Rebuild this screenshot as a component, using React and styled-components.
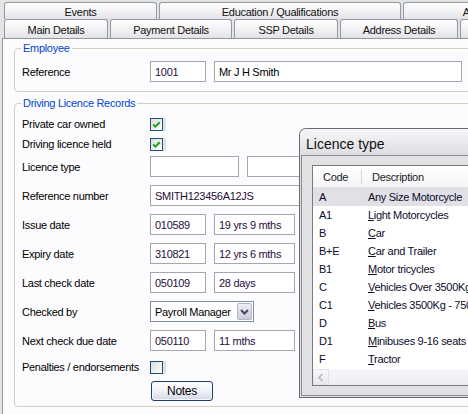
import React from 'react'
import styled, { createGlobalStyle } from 'styled-components'

const GlobalStyle = createGlobalStyle`
  html, body {
    margin: 0;
    padding: 0;
  }
  body {
    background: #e4e4e4;
    font-family: "Liberation Sans", Arial, sans-serif;
    font-size: 11px;
    letter-spacing: -0.3px;
    color: #000;
  }
`

const tabsTop = [
  { label: 'Events', width: 153 },
  { label: 'Education / Qualifications', width: 242 },
  { label: 'Absence', width: 160 },
]

const tabsBottom = [
  { label: 'Main Details', width: 104 },
  { label: 'Payment Details', width: 122 },
  { label: 'SSP Details', width: 104 },
  { label: 'Address Details', width: 118 },
  { label: 'Pension', width: 120 },
]

const licences = [
  ['A', 'Any Size Motorcycle'],
  ['A1', 'Light Motorcycles'],
  ['B', 'Car'],
  ['B+E', 'Car and Trailer'],
  ['B1', 'Motor tricycles'],
  ['C', 'Vehicles Over 3500Kg'],
  ['C1', 'Vehicles 3500Kg - 7500Kg'],
  ['D', 'Bus'],
  ['D1', 'Minibuses 9-16 seats'],
  ['F', 'Tractor'],
]

const Tick = () => (
  <svg width="11" height="11" viewBox="0 0 11 11">
    <path d="M2.2 5.4 L4.4 7.6 L8.8 3.2" fill="none" stroke="#21a121" strokeWidth="2" />
  </svg>
)

const CheckBox = ({ checked }) => <Check>{checked && <Tick />}</Check>

const App = () => {
  return (
    <Screen>
      <GlobalStyle />
      <TabRow $height={17}>
        {tabsTop.map((t) => (
          <Tab key={t.label} $width={t.width}>{t.label}</Tab>
        ))}
      </TabRow>
      <TabRow $height={19}>
        {tabsBottom.map((t) => (
          <Tab key={t.label} $width={t.width}>{t.label}</Tab>
        ))}
      </TabRow>

      <Panel>
        <GroupBox $top={3}>
          <Legend>Employee</Legend>
          <GroupInner $pt={6} $pb={9}>
            <Row $height={21}>
              <Label>Reference</Label>
              <Controls>
                <Field $width={56}>1001</Field>
                <Field $width={248} $dark>Mr J H Smith</Field>
              </Controls>
            </Row>
          </GroupInner>
        </GroupBox>

        <GroupBox $top={5}>
          <Legend>Driving Licence Records</Legend>
          <GroupInner $pt={4} $pb={5}>
            <Row $height={20}>
              <Label>Private car owned</Label>
              <CheckBox checked />
            </Row>
            <Row $height={18} $pt={2}>
              <Label>Driving licence held</Label>
              <CheckBox checked />
            </Row>
            <Row $height={29}>
              <Label>Licence type</Label>
              <Controls>
                <Field $width={89} />
                <Field $width={120} />
              </Controls>
            </Row>
            <Row $height={29}>
              <Label>Reference number</Label>
              <Field $width={220}>SMITH123456A12JS</Field>
            </Row>
            <Row $height={29}>
              <Label>Issue date</Label>
              <Controls>
                <Field $width={56}>010589</Field>
                <Field $width={81}>19 yrs 9 mths</Field>
              </Controls>
            </Row>
            <Row $height={29}>
              <Label>Expiry date</Label>
              <Controls>
                <Field $width={56}>310821</Field>
                <Field $width={81}>12 yrs 6 mths</Field>
              </Controls>
            </Row>
            <Row $height={29}>
              <Label>Last check date</Label>
              <Controls>
                <Field $width={56}>050109</Field>
                <Field $width={81}>28 days</Field>
              </Controls>
            </Row>
            <Row $height={29}>
              <Label>Checked by</Label>
              <Select>
                <span>Payroll Manager</span>
                <DropButton>
                  <svg width="11" height="8" viewBox="0 0 11 8">
                    <path d="M2 2 L5.5 5.5 L9 2" fill="none" stroke="#404a66" strokeWidth="2" />
                  </svg>
                </DropButton>
              </Select>
            </Row>
            <Row $height={29}>
              <Label>Next check due date</Label>
              <Controls>
                <Field $width={56}>050110</Field>
                <Field $width={81}>11 mths</Field>
              </Controls>
            </Row>
            <Row $height={24}>
              <Label>Penalties / endorsements</Label>
              <CheckBox />
            </Row>
            <Row $height={22} $pt={2}>
              <Label />
              <Button>Notes</Button>
            </Row>
          </GroupInner>
        </GroupBox>
      </Panel>

      <Popup>
        <TitleBar>Licence type</TitleBar>
        <PopupBody>
          <ListView>
            <ListHeader>
              <HeadCell $first>Code</HeadCell>
              <HeadCell>Description</HeadCell>
            </ListHeader>
            {licences.map(([code, desc], i) => (
              <ListRow key={code} $selected={i === 0}>
                <CodeCell>{code}</CodeCell>
                <DescCell>
                  {i === 0 ? desc : (
                    <>
                      <u>{desc[0]}</u>
                      {desc.slice(1)}
                    </>
                  )}
                </DescCell>
              </ListRow>
            ))}
            <ScrollBar>
              <ScrollButton>
                <svg width="8" height="9" viewBox="0 0 8 9">
                  <path d="M5.5 1 L2 4.5 L5.5 8" fill="none" stroke="#b4b6c0" strokeWidth="1.6" />
                </svg>
              </ScrollButton>
            </ScrollBar>
          </ListView>
        </PopupBody>
      </Popup>
    </Screen>
  )
}

export default App

const Screen = styled.div`
  position: relative;
  width: 468px;
  height: 414px;
  overflow: hidden;
  padding-top: 2px;
  box-sizing: border-box;
`

const TabRow = styled.div`
  display: flex;
  gap: 2px;
  padding-left: 4px;
  height: ${(p) => p.$height}px;
`

const Tab = styled.div`
  flex: 0 0 ${(p) => p.$width}px;
  box-sizing: border-box;
  display: flex;
  align-items: center;
  justify-content: center;
  padding-top: 2px;
  border: 1px solid #8f9aa6;
  border-bottom: none;
  border-radius: 3px 3px 0 0;
  background: linear-gradient(#ffffff, #f4f4f6 45%, #e2e2e8);
  color: #111;
  white-space: nowrap;
  overflow: hidden;
`

const Panel = styled.div`
  margin-left: 2px;
  width: 600px;
  height: 376px;
  box-sizing: border-box;
  border-top: 1px solid #919b9c;
  border-left: 1px solid #919b9c;
  background: #fcfcfe;
  padding-left: 11px;
  overflow: hidden;
`

const GroupBox = styled.fieldset`
  margin: ${(p) => p.$top}px 0 0 0;
  padding: 0;
  width: 540px;
  min-width: 0;
  border: 1px solid #d0d0c4;
  border-radius: 4px;
`

const Legend = styled.legend`
  margin-left: 6px;
  padding: 0 2px;
  line-height: 13px;
  color: #0046d5;
`

const GroupInner = styled.div`
  padding: ${(p) => p.$pt}px 0 ${(p) => p.$pb}px 7px;
`

const Row = styled.div`
  display: flex;
  align-items: center;
  box-sizing: border-box;
  height: ${(p) => p.$height}px;
  padding-top: ${(p) => p.$pt || 0}px;
`

const Label = styled.div`
  flex: 0 0 128px;
  white-space: nowrap;
`

const Controls = styled.div`
  display: flex;
  gap: 8px;
`

const Field = styled.div`
  width: ${(p) => p.$width}px;
  height: 21px;
  box-sizing: border-box;
  display: flex;
  align-items: center;
  padding: 0 4px;
  border: 1px solid #a7a6ae;
  background: #fff;
  color: ${(p) => (p.$dark ? '#000' : '#2a0c3a')};
  white-space: nowrap;
  overflow: hidden;
`

const Check = styled.div`
  width: 13px;
  height: 13px;
  box-sizing: border-box;
  border: 1px solid #1c5180;
  background: linear-gradient(135deg, #dcdcd7, #ffffff);
  box-shadow: 3px 0 0 #e2e2e6;
  display: flex;
  align-items: center;
  justify-content: center;
`

const Select = styled.div`
  width: 104px;
  height: 21px;
  box-sizing: border-box;
  display: flex;
  align-items: center;
  justify-content: space-between;
  padding: 1px 1px 1px 4px;
  border: 1px solid #7f8ea8;
  background: #fff;
  color: #000;
`

const DropButton = styled.div`
  width: 15px;
  height: 17px;
  box-sizing: border-box;
  display: flex;
  align-items: center;
  justify-content: center;
  border: 1px solid #b5b6c4;
  border-radius: 2px;
  background: linear-gradient(#eceef4, #c9ccd8);
`

const Button = styled.div`
  margin-left: 1px;
  width: 62px;
  height: 20px;
  box-sizing: border-box;
  display: flex;
  align-items: center;
  justify-content: center;
  border: 1px solid #1f3f72;
  border-radius: 3px;
  background: linear-gradient(#ffffff, #eef0f6 55%, #d2d7e6);
  box-shadow: inset 0 0 0 1px #f4f6fb;
  font-size: 12px;
`

const Popup = styled.div`
  position: absolute;
  left: 299px;
  top: 128px;
  width: 220px;
  height: 270px;
  box-sizing: border-box;
  border: 1px solid #6c6c70;
  border-right: none;
  border-radius: 7px 0 0 0;
  background: #e0e0e2;
  overflow: hidden;
  display: flex;
  flex-direction: column;
`

const TitleBar = styled.div`
  height: 26px;
  box-sizing: border-box;
  padding: 7px 0 0 6px;
  font-size: 14px;
  line-height: 16px;
  letter-spacing: 0;
  color: #111;
  background: linear-gradient(#f6f6f8, #dedee2);
`

const PopupBody = styled.div`
  flex: 1;
  margin: 0 0 1px 1px;
  padding: 9px 0 0 10px;
  border: 1px solid #8c8c92;
  border-right: none;
  background: #e2e2e4;
`

const ListView = styled.div`
  width: 260px;
  height: 221px;
  box-sizing: border-box;
  display: flex;
  flex-direction: column;
  border: 1px solid #7a7a80;
  border-right: none;
  background: #fff;
`

const ListHeader = styled.div`
  display: flex;
  align-items: center;
  height: 21px;
  flex: none;
  border-bottom: 1px solid #e2e2e6;
  background: linear-gradient(#ffffff, #f5f5f7);
  color: #1a1a1a;
`

const HeadCell = styled.div`
  box-sizing: border-box;
  padding-left: 10px;
  width: ${(p) => (p.$first ? '49px' : 'auto')};
  height: ${(p) => (p.$first ? '14px' : 'auto')};
  line-height: 14px;
  border-right: ${(p) => (p.$first ? '1px solid #d6d6dc' : 'none')};
`

const ListRow = styled.div`
  display: flex;
  align-items: center;
  height: 18px;
  flex: none;
  background: ${(p) => (p.$selected ? '#e0e0e6' : 'transparent')};
  color: #0c0c2a;
  white-space: nowrap;
`

const CodeCell = styled.div`
  width: 49px;
  box-sizing: border-box;
  padding-left: 6px;
`

const DescCell = styled.div`
  padding-left: 6px;
`

const ScrollBar = styled.div`
  margin-top: auto;
  height: 16px;
  flex: none;
  display: flex;
  background: linear-gradient(#f6f6f8, #eceef2);
`

const ScrollButton = styled.div`
  width: 16px;
  height: 16px;
  box-sizing: border-box;
  display: flex;
  align-items: center;
  justify-content: center;
  border: 1px solid #e2e3ea;
  border-radius: 2px;
  background: linear-gradient(#f8f8fa, #e8e9ee);
`
